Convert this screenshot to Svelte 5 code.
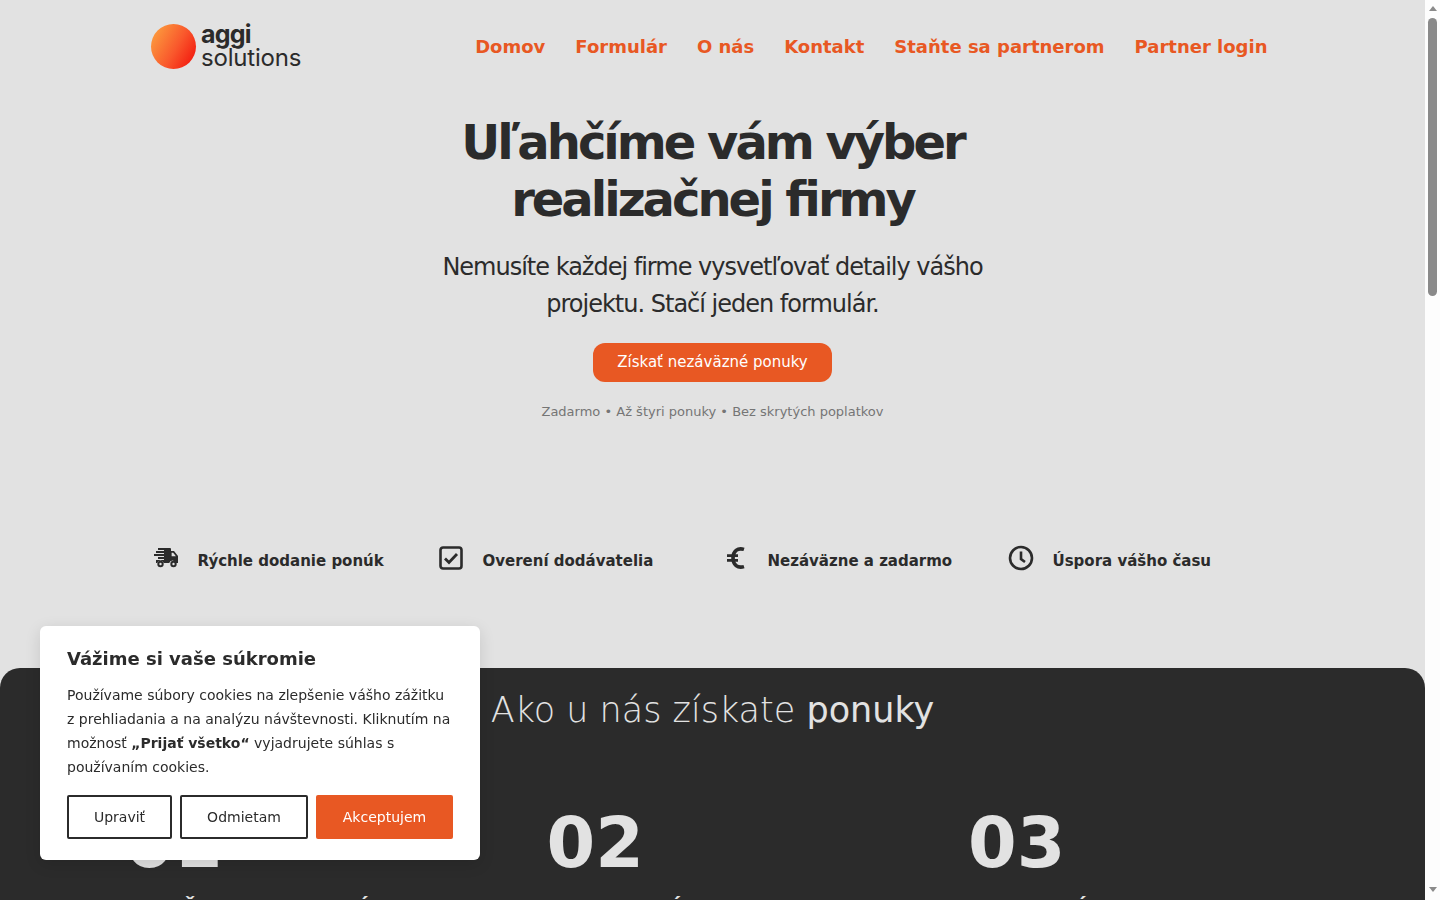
<script>
  const nav = ['Domov', 'Formulár', 'O nás', 'Kontakt', 'Staňte sa partnerom', 'Partner login'];
  const features = [
    { icon: 'truck', label: 'Rýchle dodanie ponúk' },
    { icon: 'check', label: 'Overení dodávatelia' },
    { icon: 'euro', label: 'Nezáväzne a zadarmo' },
    { icon: 'clock', label: 'Úspora vášho času' }
  ];
  const steps = [
    { num: '01', title: 'Vyplňte formulár', shift: -14 },
    { num: '02', title: 'Porovnáte ponuky', shift: 6 },
    { num: '03', title: 'Vyberáte firmu', shift: 16 }
  ];
</script>

<div class="shell">
  <div class="page">
    <header class="top">
      <div class="logo">
        <span class="ball"></span>
        <span class="word"><b>aggi</b><i>solutions</i></span>
      </div>
      <nav>
        {#each nav as item}
          <a href="#top">{item}</a>
        {/each}
      </nav>
    </header>

    <section class="hero">
      <h1>Uľahčíme vám výber<br />realizačnej firmy</h1>
      <p class="lead">Nemusíte každej firme vysvetľovať detaily vášho<br />projektu. Stačí jeden formulár.</p>
      <button class="cta">Získať nezáväzné ponuky</button>
      <p class="note">Zadarmo • Až štyri ponuky • Bez skrytých poplatkov</p>
    </section>

    <section class="features">
      {#each features as f}
        <div class="feature">
          <span class="ico">
            {#if f.icon === 'truck'}
              <svg width="26" height="22" viewBox="0 0 26 22" fill="#2b2b2b">
                <path d="M5 1h12a1 1 0 0 1 1 1v2h3l4 5v7h-2.2a3.4 3.4 0 0 0-6.6 0h-5.4a3.4 3.4 0 0 0-6.6 0H3v-3h8v-1H5V10h6V9H1V7h10V6H3V4h8V3H5z" />
                <path d="M18.6 5.8v3.4h4.3l-2.7-3.4z" fill="#e2e2e2" />
                <circle cx="7.5" cy="17" r="3.2" /><circle cx="7.5" cy="17" r="1.2" fill="#e2e2e2" />
                <circle cx="20.5" cy="17" r="3.2" /><circle cx="20.5" cy="17" r="1.2" fill="#e2e2e2" />
              </svg>
            {:else if f.icon === 'check'}
              <svg width="24" height="24" viewBox="0 0 24 24" fill="none" stroke="#2b2b2b">
                <rect x="1.5" y="1.5" width="21" height="21" rx="2.5" stroke-width="2.6" />
                <path d="M6 12.5l4 4 8-8.5" stroke-width="2.8" />
              </svg>
            {:else if f.icon === 'euro'}
              <svg width="18" height="24" viewBox="0 0 18 24" fill="none" stroke="#2b2b2b" stroke-width="3.6">
                <path d="M17 3.4c-6.4-2-11 1.8-11 8.6s4.6 10.6 11 8.6" />
                <path d="M0 9.6h11M0 14.4h11" stroke-width="2.6" />
              </svg>
            {:else}
              <svg width="26" height="26" viewBox="0 0 26 26" fill="none" stroke="#2b2b2b" stroke-width="2.6">
                <circle cx="13" cy="13" r="11" />
                <path d="M13 6.5V14l4 3" />
              </svg>
            {/if}
          </span>
          <span class="label">{f.label}</span>
        </div>
      {/each}
    </section>

    <section class="how">
      <h2><span>Ako u nás získate</span> <strong>ponuky</strong></h2>
      <div class="steps">
        {#each steps as s}
          <div class="step">
            <div class="num">{s.num}</div>
            <h3 style="margin-left: {s.shift}px">{s.title}</h3>
          </div>
        {/each}
      </div>
    </section>
  </div>

  <div class="scrollbar">
    <span class="arrow up"></span>
    <span class="thumb"></span>
    <span class="arrow down"></span>
  </div>
</div>

<div class="cookie">
  <h4>Vážime si vaše súkromie</h4>
  <p>Používame súbory cookies na zlepšenie vášho zážitku z prehliadania a na analýzu návštevnosti. Kliknutím na možnosť <b>„Prijať všetko“</b> vyjadrujete súhlas s používaním cookies.</p>
  <div class="actions">
    <button class="ghost edit">Upraviť</button>
    <button class="ghost deny">Odmietam</button>
    <button class="accept">Akceptujem</button>
  </div>
</div>

<style>
  :global(html) {
    overflow: hidden;
  }
  :global(body) {
    background: #e2e2e2;
    font-family: "DejaVu Sans", sans-serif;
    color: #2b2b2b;
  }
  .shell {
    display: flex;
    height: 900px;
    overflow: hidden;
  }
  .page {
    flex: 1;
    min-width: 0;
  }
  .scrollbar {
    width: 15px;
    flex: none;
    background: #fdfdfd;
    display: flex;
    flex-direction: column;
    align-items: center;
    padding: 6px 0 8px;
    box-sizing: border-box;
  }
  .arrow {
    width: 0;
    height: 0;
    border-left: 4.5px solid transparent;
    border-right: 4.5px solid transparent;
  }
  .up {
    border-bottom: 5px solid #8a8a8a;
  }
  .down {
    margin-top: auto;
    border-top: 5px solid #8a8a8a;
  }
  .thumb {
    width: 9px;
    height: 278px;
    margin-top: 7px;
    border-radius: 4.5px;
    background: #8a8a8a;
  }
  .top {
    width: 1140px;
    height: 92px;
    margin: 0 auto;
    padding: 0 15px 0 0;
    box-sizing: border-box;
    display: flex;
    align-items: center;
    justify-content: space-between;
  }
  .logo {
    display: flex;
    align-items: center;
    gap: 5px;
    margin-left: 8.5px;
    font-family: Inter, sans-serif;
  }
  .ball {
    width: 45px;
    height: 45px;
    border-radius: 50%;
    background: linear-gradient(120deg, #fca13f 5%, #f9582c 55%, #f2140c 95%);
  }
  .word {
    display: flex;
    flex-direction: column;
    line-height: 24px;
    color: #2b2b2b;
  }
  .word b {
    font-size: 25px;
    font-weight: 700;
    letter-spacing: -0.8px;
  }
  .word i {
    font-style: normal;
    font-size: 24px;
    font-weight: 400;
    letter-spacing: -0.2px;
  }
  nav {
    display: flex;
    gap: 30px;
  }
  nav a {
    color: #e85823;
    font-size: 18px;
    font-weight: 700;
    text-decoration: none;
  }
  .hero {
    text-align: center;
    padding-top: 22px;
  }
  h1 {
    margin: 0;
    font-size: 48px;
    line-height: 57px;
    font-weight: 700;
    letter-spacing: -3px;
    font-feature-settings: "liga";
  }
  .lead {
    margin: 21px 0 0;
    font-size: 24px;
    line-height: 37px;
    letter-spacing: -1px;
  }
  .cta {
    margin-top: 20px;
    height: 39px;
    padding: 0 24px 2px;
    border: 0;
    border-radius: 12px;
    background: #e85823;
    color: #fff;
    font-family: inherit;
    font-size: 15px;
  }
  .note {
    margin: 21px 0 0;
    font-size: 13px;
    line-height: 18px;
    color: #757575;
  }
  .features {
    width: 1140px;
    margin: 125px auto 0;
    display: grid;
    grid-template-columns: repeat(4, 285px);
  }
  .feature {
    display: flex;
    align-items: center;
    gap: 19px;
    padding-left: 10px;
    height: 30px;
  }
  .ico {
    width: 26px;
    flex: none;
    display: flex;
    justify-content: center;
    margin-top: -6px;
  }
  .label {
    font-size: 15px;
    font-weight: 700;
  }
  .how {
    margin-top: 92px;
    height: 400px;
    background: #2b2b2b;
    border-radius: 20px 20px 0 0;
    color: #e2e2e2;
    padding-top: 17px;
  }
  h2 {
    margin: 0;
    text-align: center;
    font-size: 35px;
    line-height: 50px;
    font-weight: 400;
  }
  h2 span {
    font-weight: 200;
  }
  h2 strong {
    font-weight: 400;
  }
  .steps {
    margin: 65px 0 0 125px;
    display: grid;
    grid-template-columns: repeat(3, 421.5px);
  }
  .num {
    font-size: 70px;
    font-weight: 700;
    line-height: 86px;
  }
  h3 {
    margin: 11px 0 0;
    font-size: 24px;
    font-weight: 700;
    white-space: nowrap;
    text-transform: uppercase;
  }
  .cookie {
    position: fixed;
    left: 40px;
    bottom: 40px;
    width: 440px;
    height: 234px;
    box-sizing: border-box;
    padding: 21px 27px;
    background: #fff;
    border-radius: 6px;
    box-shadow: 0 4px 16px rgba(0, 0, 0, 0.12);
    color: #2b2b2b;
  }
  h4 {
    margin: 0;
    font-size: 18px;
    line-height: 24px;
    font-weight: 700;
  }
  .cookie p {
    margin: 12px 0 0;
    font-size: 14px;
    line-height: 24px;
  }
  .actions {
    display: flex;
    gap: 8px;
    margin-top: 16px;
  }
  .actions button {
    height: 44px;
    font-family: inherit;
    font-size: 14px;
    border-radius: 2px;
    box-sizing: border-box;
  }
  .ghost {
    background: #fff;
    color: #2b2b2b;
    border: 2px solid #2b2b2b;
  }
  .edit {
    width: 105px;
  }
  .deny {
    width: 128px;
  }
  .accept {
    width: 137px;
    background: #e85823;
    color: #fff;
    border: 0;
  }
</style>
